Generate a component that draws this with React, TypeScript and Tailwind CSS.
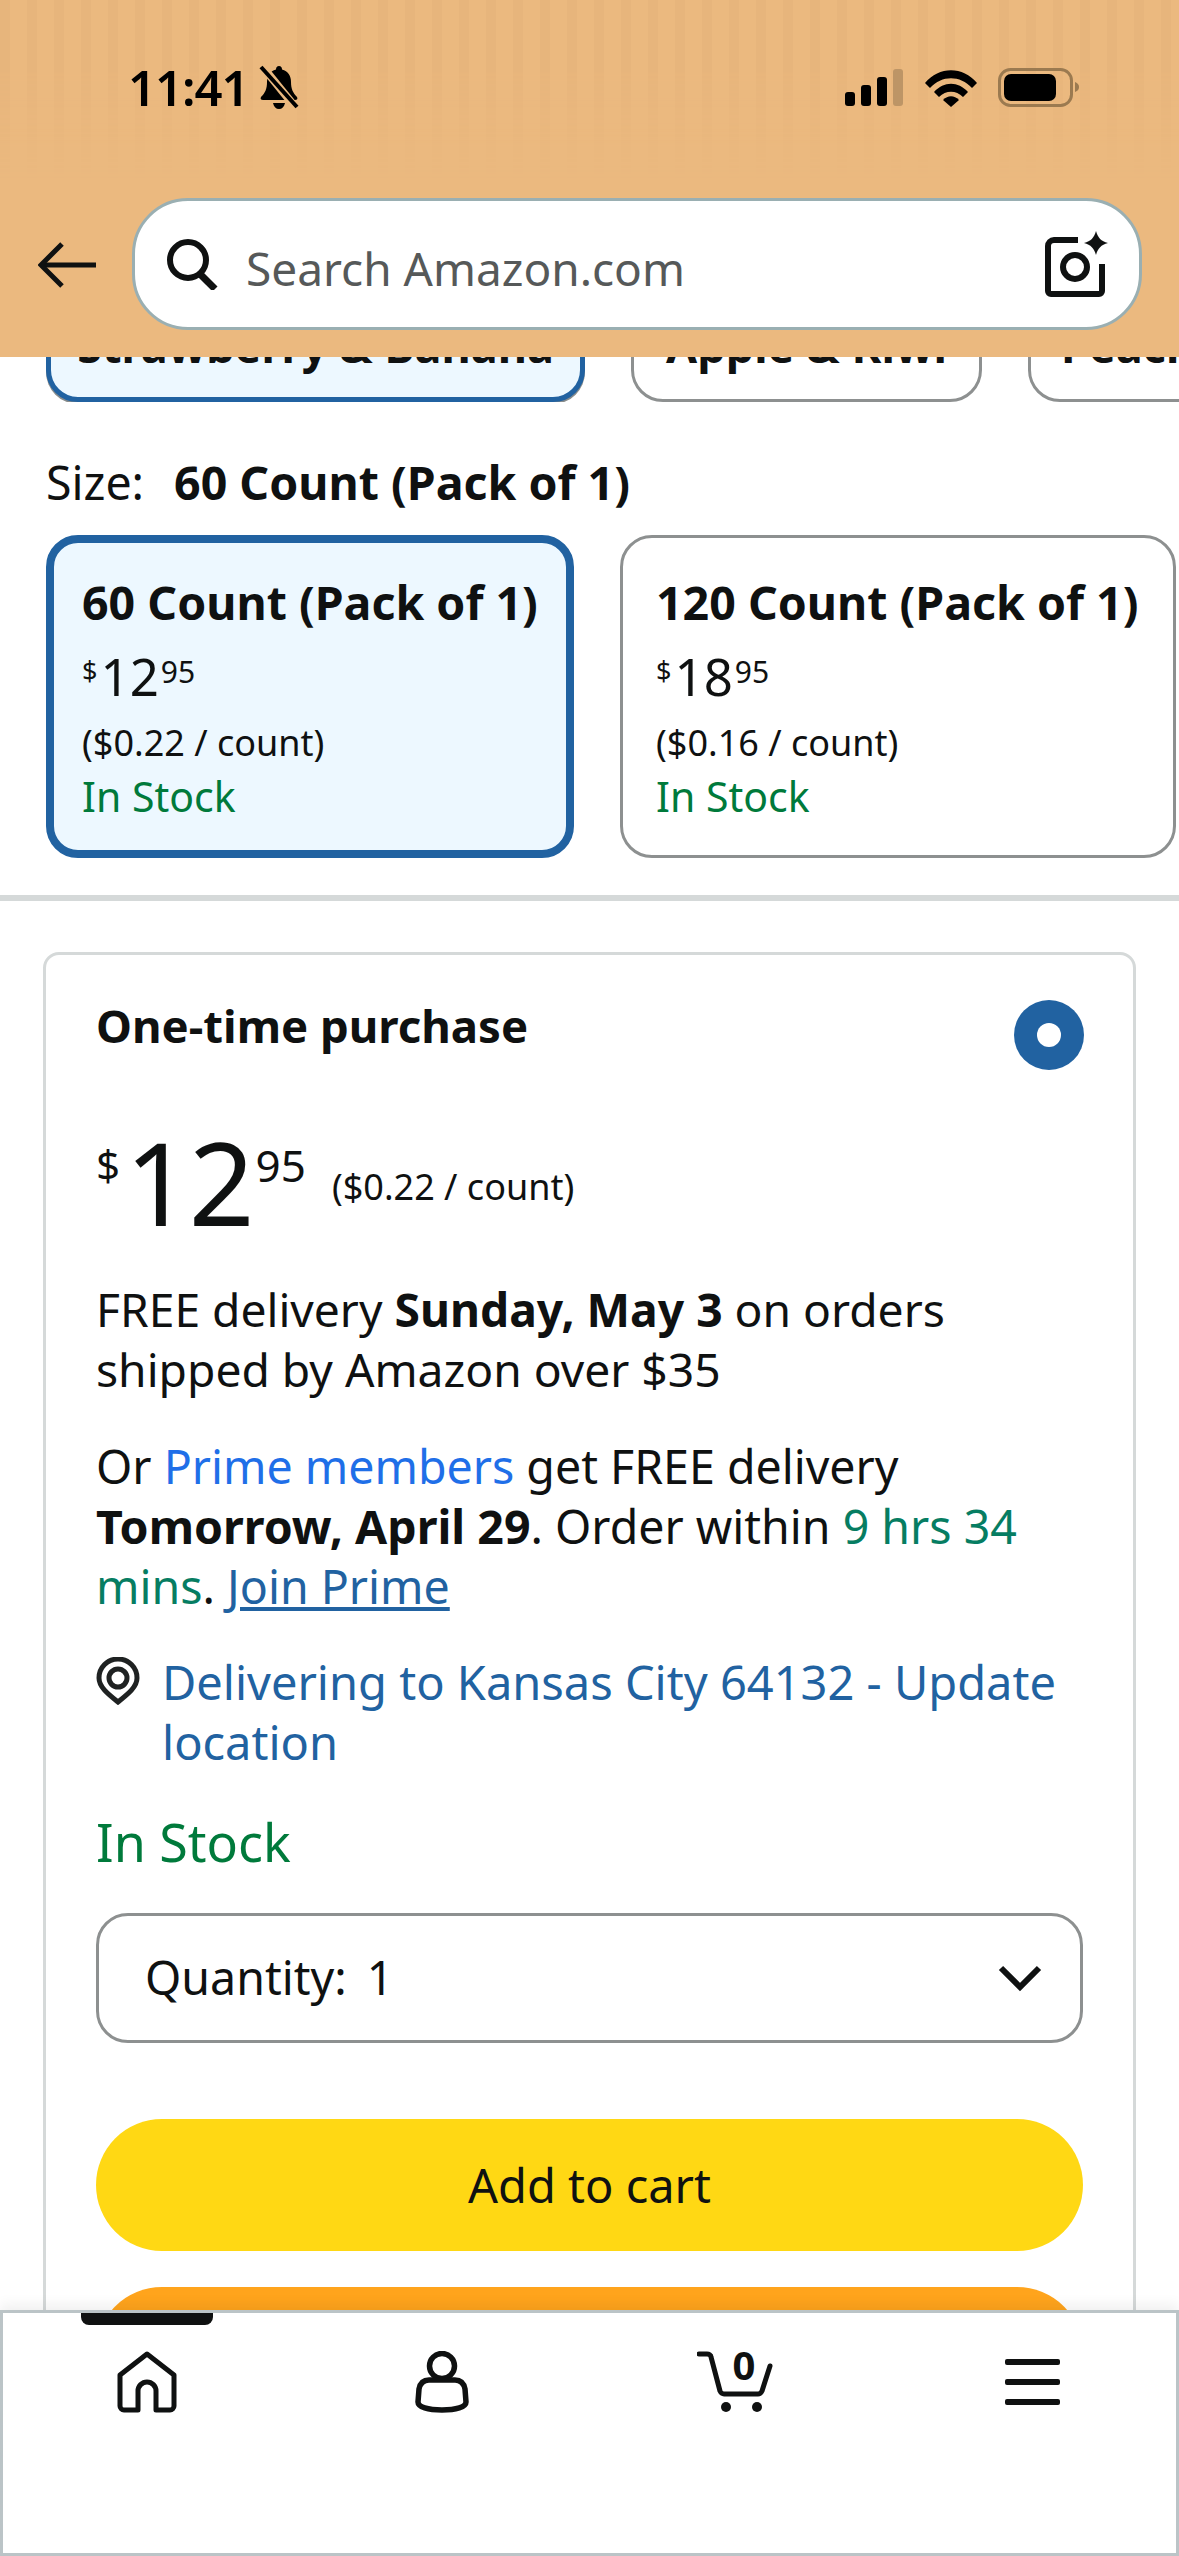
import React from "react"

const CheckGreen = "text-[#007a3b]"

function StatusBar() {
  return (
    <div className="flex h-[198px] items-start justify-between pl-[128px] pr-[98px] pt-[62px]">
      <div className="flex items-center gap-[8px]">
        <span className="text-[49px] font-semibold leading-[50px] tracking-[-1px] text-black">11:41</span>
        <svg width="44" height="46" viewBox="0 0 44 46" fill="black">
          <path d="M22 2c-2 0-3 1.500-3 3.500C13 7 10 12 10 18c0 7-2 11-6 15-1 2 0 3 2 3h32c2 0 3-1 2-3-4-4-6-8-6-15 0-6-3-11-9-12.500C25 3.500 24 2 22 2z" />
          <path d="M16 39c1 4 3 6 6 6s5-2 6-6z" />
          <path d="M5 2 39 44" stroke="#ebb97f" strokeWidth="8" />
          <path d="M4 3 40 43" stroke="black" strokeWidth="4" />
        </svg>
      </div>
      <div className="flex items-center pt-[6px]">
        <svg width="62" height="38" viewBox="0 0 62 38" className="mr-[18px]">
          <rect x="0" y="23" width="10" height="14" rx="3" fill="black" />
          <rect x="16" y="16" width="10" height="21" rx="3" fill="black" />
          <rect x="32" y="8" width="10" height="29" rx="3" fill="black" />
          <rect x="48" y="0" width="10" height="37" rx="3" fill="#bd9566" />
        </svg>
        <svg width="52" height="38" viewBox="0 0 52 38" fill="black" className="mr-[21px]">
          <path d="M0 14C14-3 38-3 52 14l-5 5C35 6 17 6 5 19z" />
          <path d="M9 23c10-11 24-11 34 0l-5 5c-7-7-17-7-24 0z" />
          <path d="M18 31c5-5 11-5 16 0l-8 7z" />
        </svg>
        <svg width="83" height="40" viewBox="0 0 83 40">
          <rect x="1.500" y="1.500" width="72" height="36" rx="11" fill="none" stroke="#9b7a50" strokeWidth="3" />
          <rect x="6" y="6" width="52" height="27" rx="7" fill="black" />
          <path d="M77 14c3 1 4 3 4 5s-1 4-4 5z" fill="#9b7a50" />
        </svg>
      </div>
    </div>
  )
}

function SearchHeader() {
  return (
    <div className="flex h-[159px] items-start pl-[38px] pr-[37px]">
      <div className="flex h-[134px] w-[94px] shrink-0 items-center">
        <svg width="58" height="46" viewBox="0 0 58 46" fill="none" stroke="#0f1111" strokeWidth="5">
          <path d="M58 23H4" />
          <path d="M24 2 3 23l21 21" />
        </svg>
      </div>
      <div className="flex h-[132px] flex-1 items-center rounded-[56px] border-[3px] border-[#9aafb2] bg-white pl-[29px] pr-[30px]">
        <svg width="56" height="52" viewBox="0 0 56 52" fill="none" stroke="#0f1111" strokeWidth="6" className="shrink-0">
          <circle cx="24" cy="22" r="18" />
          <path d="m36 36 15 15" strokeWidth="7" />
        </svg>
        <span className="ml-[26px] mt-[8px] flex-1 text-[46px] text-[#565959]">Search Amazon.com</span>
        <svg width="64" height="66" viewBox="0 0 64 66" fill="none" className="shrink-0">
          <path d="M33 9H9a6 6 0 0 0-6 6v45a3 3 0 0 0 3 3h48a3 3 0 0 0 3-3V33" stroke="#0f1111" strokeWidth="6" />
          <circle cx="30" cy="36" r="12" stroke="#0f1111" strokeWidth="6" />
          <path d="M51 0c2 7 5 10 12 12-7 2-10 5-12 12-2-7-5-10-12-12 7-2 10-5 12-12z" fill="#0f1111" />
        </svg>
      </div>
    </div>
  )
}

function VariantStrip() {
  return (
    <div className="flex h-[45px] items-end gap-[46px] overflow-hidden pl-[46px]">
      <div className="flex h-[120px] w-[539px] shrink-0 items-center justify-center rounded-[32px] border-[5px] border-[#2162a1] bg-[#edf8ff] shadow-[0_2px_0_#888c8c]">
        <span className="mt-[7px] text-[45px] font-bold whitespace-nowrap text-[#0f1111]">Strawberry &amp; Banana</span>
      </div>
      <div className="flex h-[120px] w-[351px] shrink-0 items-center justify-center rounded-[32px] border-[3px] border-[#8d9090]">
        <span className="mt-[7px] text-[45px] font-bold whitespace-nowrap text-[#0f1111]">Apple &amp; Kiwi</span>
      </div>
      <div className="flex h-[120px] w-[300px] shrink-0 items-center rounded-[32px] border-[3px] border-[#8d9090] pl-[30px]">
        <span className="mt-[7px] text-[45px] font-bold whitespace-nowrap text-[#0f1111]">Peach</span>
      </div>
    </div>
  )
}

function SizeCard({ title, whole, per, selected }: { title: string; whole: string; per: string; selected?: boolean }) {
  return (
    <div
      className={
        selected
          ? "h-[323px] w-[528px] shrink-0 rounded-[32px] border-[8px] border-[#2162a1] bg-[#edf8ff] pl-[28px] pt-[31px]"
          : "h-[323px] w-[556px] shrink-0 rounded-[32px] border-[3px] border-[#8d9090] bg-white pl-[33px] pt-[36px]"
      }
    >
      <div className="text-[46.500px] font-bold leading-[56px] whitespace-nowrap text-[#0f1111]">{title}</div>
      <div className="mt-[18px] flex h-[56px] items-start text-[#0f1111]">
        <span className="mt-[8px] text-[27px] leading-[30px]">$</span>
        <span className="ml-[3px] text-[51px] leading-[56px]">{whole}</span>
        <span className="ml-[2px] mt-[9px] text-[30px] leading-[30px]">95</span>
      </div>
      <div className="mt-[16px] text-[36px] leading-[46px] text-[#0f1111]">{per}</div>
      <div className={`mt-[7px] text-[41px] leading-[46px] ${CheckGreen}`}>In Stock</div>
    </div>
  )
}

function PurchaseCard() {
  return (
    <div className="mx-[43px] h-[1400px] rounded-t-[16px] border-[3px] border-[#d5d9d9] px-[50px] pt-[41px]">
      <div className="flex items-start justify-between">
        <span className="text-[45.500px] leading-[58px] font-bold text-[#0f1111]">One-time purchase</span>
        <div className="mt-[4px] mr-[-1px] flex h-[70px] w-[70px] items-center justify-center rounded-full bg-[#2162a1]">
          <div className="h-[24px] w-[24px] rounded-full bg-white" />
        </div>
      </div>
      <div className="mt-[50px] flex h-[110px] items-start text-[#0f1111]">
        <span className="mt-[20px] text-[42px] leading-[50px]">$</span>
        <span className="ml-[5px] text-[115px] leading-[124px] tracking-[-2px]">12</span>
        <span className="ml-[3px] mt-[20px] text-[44px] leading-[50px]">95</span>
        <span className="ml-[26px] mt-[44px] text-[36px] leading-[46px]">($0.22 / count)</span>
      </div>
      <p className="mt-[50px] text-[46.200px] leading-[60px] text-[#0f1111]">
        FREE delivery <b>Sunday, May 3</b> on orders
        <br />
        shipped by Amazon over $35
      </p>
      <p className="mt-[36px] text-[46.500px] leading-[60px] text-[#0f1111]">
        Or <span className="text-[#1f6fe8]">Prime members</span> get FREE delivery
        <br />
        <b>Tomorrow, April 29</b>. Order within <span className="text-[#067d62]">9 hrs 34</span>
        <br />
        <span className="text-[#067d62]">mins</span>. <span className="text-[#2162a1] underline">Join Prime</span>
      </p>
      <div className="mt-[36px] flex items-start">
        <svg width="44" height="48" viewBox="0 0 44 48" fill="none" stroke="#1f2222" className="mt-[5px] shrink-0">
          <path d="M22 45C12 37 3 30 3 21a19 19 0 0 1 38 0c0 9-9 16-19 24z" strokeWidth="5" />
          <circle cx="22" cy="21" r="9" strokeWidth="5" />
        </svg>
        <span className="ml-[22px] text-[47px] leading-[60px] text-[#2162a1]">
          Delivering to Kansas City 64132 - Update
          <br />
          location
        </span>
      </div>
      <div className={`mt-[36px] text-[52px] leading-[68px] ${CheckGreen}`}>In Stock</div>
      <div className="mt-[37px] flex h-[130px] items-center justify-between rounded-[32px] border-[3px] border-[#8d9090] pl-[46px] pr-[38px]">
        <span className="text-[46.500px] text-[#0f1111]">
          Quantity:<span className="ml-[20px]">1</span>
        </span>
        <svg width="44" height="28" viewBox="0 0 44 28" fill="none" stroke="#0f1111" strokeWidth="6">
          <path d="m3 4 19 19L41 4" />
        </svg>
      </div>
      <div className="mt-[76px] flex h-[132px] items-center justify-center rounded-full bg-[#ffd814] text-[47px] text-[#0f1111]">
        Add to cart
      </div>
      <div className="mt-[36px] h-[132px] rounded-full bg-[#ffa41c]" />
    </div>
  )
}

function BottomNav() {
  return (
    <div className="relative grid h-[246px] shrink-0 grid-cols-4 border-[3px] border-[#bbc4c7] bg-white shadow-[0_-6px_12px_rgba(0,0,0,0.06)]">
      <div className="absolute left-[78px] top-0 h-[12px] w-[132px] rounded-b-[8px] bg-[#0f1111]" />
      <div className="absolute left-[114px] top-[38px]">
        <svg width="60" height="62" viewBox="0 0 60 62" fill="none" stroke="#0f1111" strokeWidth="5" strokeLinejoin="round">
          <path d="M30 3 3 24v31a4 4 0 0 0 4 4h14V40a9 9 0 0 1 18 0v19h14a4 4 0 0 0 4-4V24z" />
        </svg>
      </div>
      <div className="absolute left-[412px] top-[38px]">
        <svg width="54" height="62" viewBox="0 0 54 62" fill="none" stroke="#0f1111" strokeWidth="5.500">
          <circle cx="27" cy="15" r="12.500" />
          <path d="M14 29h26c6 0 9 4 10 9l1 13c0 5-10 8-24 8S3 56 3 51l1-13c1-5 4-9 10-9z" />
        </svg>
      </div>
      <div className="absolute left-[694px] top-[33px]">
        <svg width="80" height="68" viewBox="0 0 80 68" fill="none" stroke="#0f1111" strokeWidth="5">
          <path d="M2 8h8c2 0 4 1 4 3l9 34c1 2 2 3 4 3h34c2 0 3-1 4-3l8-25" strokeLinecap="round" />
          <circle cx="29" cy="61" r="5" fill="#0f1111" stroke="none" />
          <circle cx="60" cy="61" r="5" fill="#0f1111" stroke="none" />
        </svg>
      </div>
      <div className="absolute left-[701px] top-[30px] w-[80px] text-center text-[40px] font-bold leading-[44px] text-[#0f1111]">0</div>
      <div className="absolute left-[1002px] top-[46px] flex w-[55px] flex-col gap-[14px]">
        <div className="h-[6px] rounded-[2px] bg-[#0f1111]" />
        <div className="h-[6px] rounded-[2px] bg-[#0f1111]" />
        <div className="h-[6px] rounded-[2px] bg-[#0f1111]" />
      </div>
    </div>
  )
}

export default function App() {
  return (
    <div className="flex h-[2556px] w-[1179px] flex-col overflow-hidden bg-white font-['Noto_Sans',sans-serif]">
      <div className="relative h-[357px] shrink-0 bg-[#ebb97f]">
        <div className="absolute inset-x-0 top-0 h-[180px] bg-[repeating-linear-gradient(90deg,#e5b27a_0px,#e5b27a_10px,#ebb97f_10px,#ebb97f_27px)] opacity-50 [mask-image:linear-gradient(180deg,black_40%,transparent)]" />
        <div className="relative">
          <StatusBar />
          <SearchHeader />
        </div>
      </div>
      <VariantStrip />
      <div className="flex-1 overflow-hidden">
        <div className="pl-[46px] pt-[51px] text-[46.500px] leading-[58px] text-[#0f1111]">
          Size:<b className="ml-[30px]">60 Count (Pack of 1)</b>
        </div>
        <div className="mt-[24px] flex gap-[46px] pl-[46px]">
          <SizeCard title="60 Count (Pack of 1)" whole="12" per="($0.22 / count)" selected />
          <SizeCard title="120 Count (Pack of 1)" whole="18" per="($0.16 / count)" />
        </div>
        <div className="mt-[37px] h-[6px] bg-[#d5d9d9]" />
        <div className="mt-[51px]">
          <PurchaseCard />
        </div>
      </div>
      <BottomNav />
    </div>
  )
}
